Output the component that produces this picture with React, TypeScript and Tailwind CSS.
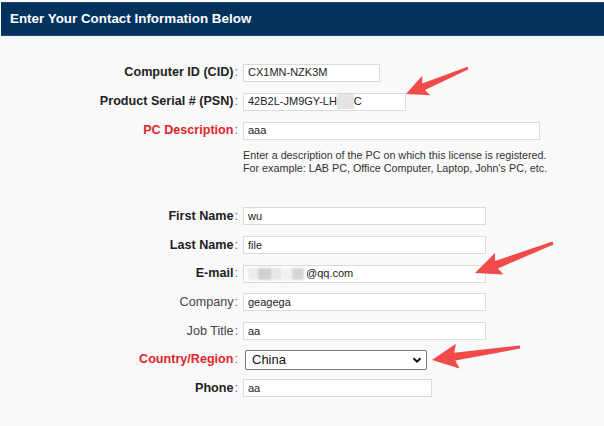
import React from 'react';

type Pt = [number, number];

// tapered red arrow as a single polygon
const arrowPoints = (tail: Pt, tip: Pt, L: number, W: number, wn: number, wt: number) => {
  const dx = tip[0] - tail[0];
  const dy = tip[1] - tail[1];
  const len = Math.hypot(dx, dy);
  const d: Pt = [dx / len, dy / len];
  const n: Pt = [-d[1], d[0]];
  const neck: Pt = [tip[0] - d[0] * L, tip[1] - d[1] * L];
  const wing: Pt = [tip[0] - d[0] * (L + 3), tip[1] - d[1] * (L + 3)];
  const pts: Pt[] = [
    [tail[0] + n[0] * wt, tail[1] + n[1] * wt],
    [neck[0] + n[0] * wn, neck[1] + n[1] * wn],
    [wing[0] + n[0] * W, wing[1] + n[1] * W],
    tip,
    [wing[0] - n[0] * W, wing[1] - n[1] * W],
    [neck[0] - n[0] * wn, neck[1] - n[1] * wn],
    [tail[0] - n[0] * wt, tail[1] - n[1] * wt],
  ];
  return pts.map((p) => `${p[0].toFixed(1)},${p[1].toFixed(1)}`).join(' ');
};

const arrows = [
  arrowPoints([468, 68], [406, 94], 19, 10.5, 3.5, 1.3),
  arrowPoints([553, 243], [475, 273], 23, 11.5, 4, 1.5),
  arrowPoints([520, 347], [432, 360], 23, 12.5, 4, 1.5),
];

type Tone = 'bold' | 'red' | 'plain';

const Label = ({ label, tone = 'bold' }: { label: string; tone?: Tone }) => {
  const labelCls =
    tone === 'red'
      ? 'font-bold text-[#e0262b]'
      : tone === 'plain'
      ? 'text-[#444]'
      : 'font-bold text-[#222]';
  return (
    <div className="w-[238px] text-right text-[12.6px] leading-none whitespace-nowrap">
      <span className={labelCls}>{label}</span>
      <span className="ml-[1px] text-[#666]">:</span>
    </div>
  );
};

const Row = ({ label, tone, h = 'h-[28.67px]', children }: { label: string; tone?: Tone; h?: string; children: React.ReactNode }) => (
  <div className={`flex items-center ${h}`}>
    <Label label={label} tone={tone} />
    <div className="ml-[5px]">{children}</div>
  </div>
);

const Field = ({ w, children }: { w: string; children: React.ReactNode }) => (
  <div
    className={`${w} h-[18px] bg-white border border-[#dadada] flex items-center pl-[4px] text-[11px] text-[#222] whitespace-nowrap overflow-hidden`}
  >
    {children}
  </div>
);

export default function App() {
  return (
    <div
      className="relative w-[604px] h-[426px] bg-[#f9f9f9] overflow-hidden"
      style={{ fontFamily: '"Liberation Sans", Arial, sans-serif' }}
    >
      <div className="pt-[2px]">
        <div className="ml-[1px] h-[34px] bg-[#03325f] border-y border-[#1d4a78] flex items-center pl-[9px]">
          <h1 className="text-white font-bold text-[13.4px]">Enter Your Contact Information Below</h1>
        </div>
      </div>

      <div className="pt-[22px]">
        <Row label="Computer ID (CID)" h="h-[29px]">
          <Field w="w-[137px]">CX1MN-NZK3M</Field>
        </Row>
        <Row label="Product Serial # (PSN)" h="h-[29px]">
          <Field w="w-[163px]">
            42B2L-JM9GY-LH
            <span className="inline-block w-[17px] h-[15px] bg-[#e4e4e4]" />
            C
          </Field>
        </Row>
        <Row label="PC Description" tone="red" h="h-[29px]">
          <Field w="w-[297px]">aaa</Field>
        </Row>

        <div className="ml-[243px] mt-[4px] text-[10.75px] leading-[13px] text-[#333]">
          <p>Enter a description of the PC on which this license is registered.</p>
          <p>For example: LAB PC, Office Computer, Laptop, John's PC, etc.</p>
        </div>

        <div className="mt-[27px]">
          <Row label="First Name">
            <Field w="w-[243px]">wu</Field>
          </Row>
          <Row label="Last Name">
            <Field w="w-[243px]">file</Field>
          </Row>
          <Row label="E-mail">
            <Field w="w-[243px]">
              <span className="inline-block w-[10px] h-[12px] bg-[#ececec] blur-[1px]" />
              <span className="inline-block w-[14px] h-[12px] bg-[#cfcfcf] blur-[1px]" />
              <span className="inline-block w-[10px] h-[12px] bg-[#e6e6e6] blur-[1px]" />
              <span className="inline-block w-[10px] h-[12px] bg-[#f1f1f1] blur-[1px]" />
              <span className="inline-block w-[12px] h-[12px] bg-[#d6d6d6] blur-[1px]" />
              <span className="ml-[2px]">@qq.com</span>
            </Field>
          </Row>
          <Row label="Company" tone="plain">
            <Field w="w-[243px]">geagega</Field>
          </Row>
          <Row label="Job Title" tone="plain">
            <Field w="w-[243px]">aa</Field>
          </Row>
          <Row label="Country/Region" tone="red">
            <div className="ml-[2px] w-[182px] h-[20px] bg-white border border-[#767676] rounded-[2px] flex items-center justify-between pl-[6px] pr-[4px] text-[13px] text-[#111]">
              <span>China</span>
              <svg width="10" height="10" viewBox="0 0 10 10">
                <path d="M1.5 3.2 L5 6.7 L8.5 3.2" fill="none" stroke="#111" strokeWidth="2" />
              </svg>
            </div>
          </Row>
          <Row label="Phone">
            <Field w="w-[189px]">aa</Field>
          </Row>
        </div>
      </div>

      <svg className="absolute inset-0 pointer-events-none" width="604" height="426">
        {arrows.map((p, i) => (
          <polygon key={i} points={p} fill="#f04a4a" />
        ))}
      </svg>
    </div>
  );
}
